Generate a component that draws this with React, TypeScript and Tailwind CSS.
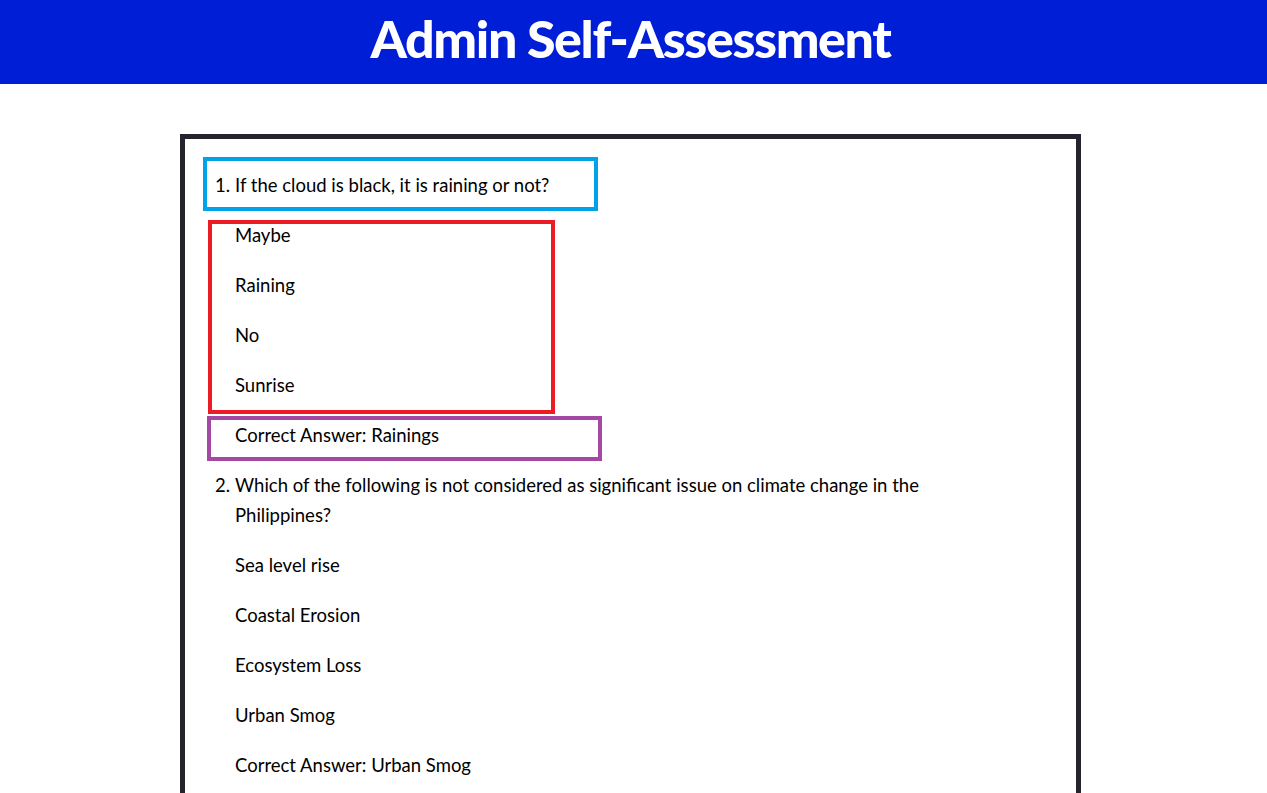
const questions = [
  {
    text: 'If the cloud is black, it is raining or not?',
    options: ['Maybe', 'Raining', 'No', 'Sunrise'],
    answer: 'Rainings',
  },
  {
    text: 'Which of the following is not considered as significant issue on climate change in the Philippines?',
    options: ['Sea level rise', 'Coastal Erosion', 'Ecosystem Loss', 'Urban Smog'],
    answer: 'Urban Smog',
  },
];

export default function App() {
  return (
    <div className="min-h-screen bg-white font-['Lato',sans-serif] text-black">
      <header className="h-[84px] bg-[#001ed6] flex items-center justify-center">
        <h1 className="text-white text-[52px] font-black tracking-[-1.4px] leading-none pb-[9px] pr-[6px]">
          Admin Self-Assessment
        </h1>
      </header>

      <div className="pt-[50px] pl-[180px]">
        <div className="relative w-[901px] border-[5px] border-[#25232e] pl-[30px] pr-[40px] pt-[31px] pb-[40px]">
          <div className="flex flex-col gap-[20px] text-[18.5px] leading-[30px]">
            {questions.map((q, i) => (
              <div key={i} className="flex flex-col gap-[20px]">
                <div className="flex w-[740px]">
                  <span className="w-[20px] shrink-0">{i + 1}.</span>
                  <span>{q.text}</span>
                </div>
                {q.options.map((o) => (
                  <div key={o} className="pl-[20px]">{o}</div>
                ))}
                <div className="pl-[20px]">Correct Answer: {q.answer}</div>
              </div>
            ))}
          </div>

          {/* annotation boxes */}
          <div className="absolute left-[18px] top-[18px] w-[395px] h-[54px] border-4 border-[#00a2e8]" />
          <div className="absolute left-[23px] top-[81px] w-[347px] h-[194px] border-4 border-[#ed1c24]" />
          <div className="absolute left-[22px] top-[277px] w-[395px] h-[45px] border-4 border-[#a349a4]" />
        </div>
      </div>
    </div>
  );
}
